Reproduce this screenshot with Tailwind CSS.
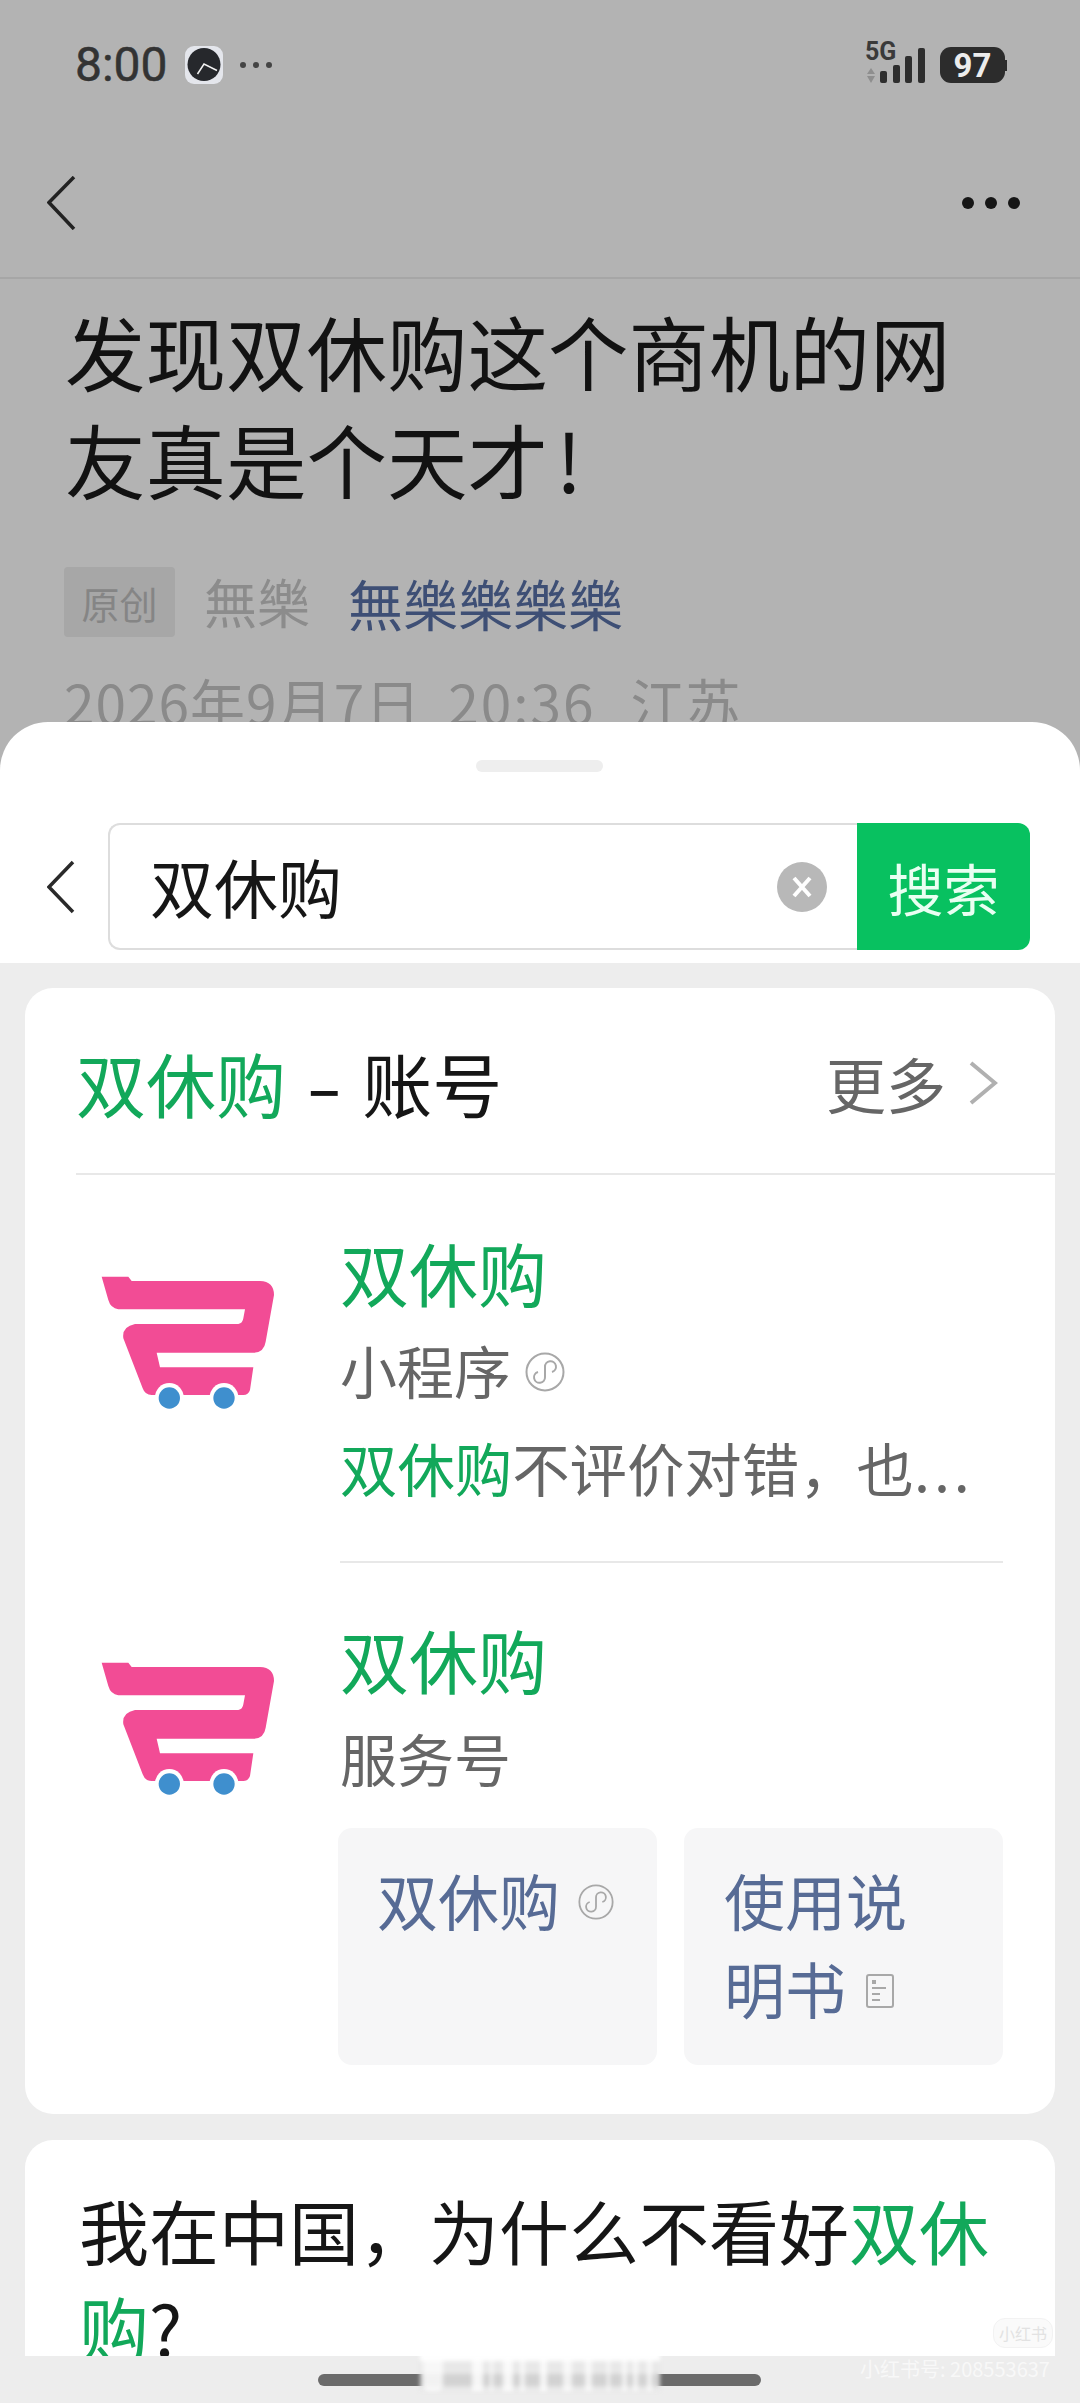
<!DOCTYPE html>
<html lang="zh-CN">
<head>
    <meta charset="UTF-8">
    <meta name="viewport" content="width=device-width, initial-scale=1.0">
    <title>双休购 - 搜索</title>
    <script src="https://cdn.jsdelivr.net/npm/@tailwindcss/browser@4"></script>
</head>
<body class="bg-[#b3b3b3]">
<div class="relative w-[1080px] h-[2403px] overflow-hidden bg-[#b3b3b3] font-['Noto_Sans_CJK_SC',sans-serif] text-[#161616]">

    <!-- dimmed article behind the sheet -->
    <div class="h-[722px] overflow-hidden">
        <!-- status bar -->
        <div class="h-[130px] flex justify-between pl-[75px] pr-[73px] pt-[43px]">
            <div class="flex items-start">
                <span class="font-['Roboto',sans-serif] text-[48px] leading-[44px] text-[#333333] [-webkit-text-stroke:0.5px_#333333]">8:00</span>
                <svg class="ml-[17px] mt-[3px]" width="38" height="38" viewBox="0 0 38 38">
                    <rect width="38" height="38" rx="9" fill="#e4e6ec"/>
                    <circle cx="19" cy="18.500" r="16.500" fill="#26282c"/>
                    <path d="M12.500 28L19 18L32 24.500" stroke="#f2f2f2" stroke-width="1.500" fill="none"/>
                </svg>
                <div class="ml-[17px] mt-[19px] flex gap-[7px]">
                    <div class="w-[6px] h-[6px] rounded-full bg-[#444444]"></div>
                    <div class="w-[6px] h-[6px] rounded-full bg-[#444444]"></div>
                    <div class="w-[6px] h-[6px] rounded-full bg-[#444444]"></div>
                </div>
            </div>
            <div class="flex items-start">
                <div class="relative w-[60px] h-[42px]">
                    <span class="absolute left-0 -top-[4px] font-['Roboto',sans-serif] font-bold text-[25px] leading-[26px] text-[#3a3a3a]">5G</span>
                    <svg class="absolute left-0 top-0" width="60" height="42" viewBox="0 0 60 42">
                        <path d="M2 31L6 25L10 31ZM2 33H10L6 40Z" fill="#8e8e8e"/>
                        <rect x="15" y="28" width="7" height="12" rx="2" fill="#2e2e2e"/>
                        <rect x="28" y="22" width="7" height="18" rx="2" fill="#2e2e2e"/>
                        <rect x="40" y="13" width="7" height="27" rx="2" fill="#2e2e2e"/>
                        <rect x="53" y="5" width="7" height="35" rx="2" fill="#2e2e2e"/>
                    </svg>
                </div>
                <div class="ml-[15px] mt-[4px] w-[65px] h-[36px] rounded-[11px] bg-[#2c2c2c] flex items-center justify-center font-['Roboto',sans-serif] font-bold text-[33px] leading-none text-[#ececec]">97</div>
                <div class="mt-[17px] w-[2px] h-[11px] bg-[#2c2c2c]"></div>
            </div>
        </div>
        <!-- article nav -->
        <div class="h-[149px] border-b-2 border-[#a6a6a6] flex justify-between items-start pl-[47px] pr-[60px] pt-[46px]">
            <svg width="30" height="54" viewBox="0 0 30 54"><path d="M27 1L2 26.500L27 53" fill="none" stroke="#222222" stroke-width="3.500"/></svg>
            <div class="flex gap-[11px] pt-[21px]">
                <div class="w-[12px] h-[12px] rounded-full bg-[#161616]"></div>
                <div class="w-[12px] h-[12px] rounded-full bg-[#161616]"></div>
                <div class="w-[12px] h-[12px] rounded-full bg-[#161616]"></div>
            </div>
        </div>
        <!-- article head -->
        <div class="pl-[65px] pt-[17px] text-[80.500px] leading-[108px] text-[#121212]">
            <p>发现双休购这个商机的网</p>
            <p>友真是个天才<span class="ml-[8px]">!</span></p>
        </div>
        <div class="mt-[55px] pl-[64px] h-[70px] flex items-center">
            <div class="w-[111px] h-[70px] rounded-[4px] bg-[#a7a7a7] flex items-center justify-center text-[38px] text-[#858585]">原创</div>
            <span class="ml-[29px] text-[53px] text-[#8c8c8c]">無樂</span>
            <span class="ml-[38px] text-[55px] text-[#3e4f75]">無樂樂樂樂</span>
        </div>
        <div class="mt-[29px] pl-[64px] flex text-[55px] leading-[70px] text-[#8a8a8a]">
            <span class="tracking-[1px]">2026年9月7日</span>
            <span class="ml-[27px] tracking-[2px]">20:36</span>
            <span class="ml-[35px]">江苏</span>
        </div>
    </div>

    <!-- search sheet -->
    <div class="h-[1681px] rounded-t-[48px] bg-white flex flex-col overflow-hidden">
        <div class="h-[241px] shrink-0 relative">
            <div class="absolute left-[476px] top-[38px] w-[127px] h-[12px] rounded-full bg-[#eeeeee]"></div>
            <div class="pt-[101px] pl-[47px] flex items-center">
                <svg class="mr-[33px]" width="28" height="54" viewBox="0 0 28 54"><path d="M26 2L2 27L26 52" fill="none" stroke="#2a2a2a" stroke-width="3.500"/></svg>
                <div class="w-[922px] h-[127px] flex">
                    <div class="flex-1 rounded-l-[12px] border-y-2 border-l-2 border-[#dddddd] flex items-center justify-between pl-[40px] pr-[30px]">
                        <span class="text-[64px] text-[#161616] -mt-[3px]">双休购</span>
                        <svg width="50" height="50" viewBox="0 0 50 50">
                            <circle cx="25" cy="25" r="25" fill="#b8b8b8"/>
                            <path d="M17 16L33 34M33 16L17 34" stroke="#ffffff" stroke-width="4"/>
                        </svg>
                    </div>
                    <div class="w-[173px] rounded-r-[12px] bg-[#08c160] flex items-center justify-center text-[56px] text-[#e9fff2]">搜索</div>
                </div>
            </div>
        </div>

        <div class="flex-1 min-h-0 bg-[#ededed] flex flex-col">
            <div class="h-[1393px] overflow-hidden px-[25px] pt-[25px] flex flex-col gap-[26px]">
                <!-- account results -->
                <div class="shrink-0 w-[1030px] rounded-[28px] bg-white">
                    <div class="ml-[51px] h-[187px] border-b-2 border-[#e8e8e8] flex items-center justify-between pr-[57px]">
                        <p class="text-[70px] leading-none mt-[4px]">
                            <span class="text-[#12a85a]">双休购</span><span class="inline-block mx-[26px] scale-x-150">-</span><span>账号</span>
                        </p>
                        <div class="flex items-center mt-[4px]">
                            <span class="text-[60px] text-[#666666]">更多</span>
                            <svg class="ml-[22px]" width="30" height="44" viewBox="0 0 30 44"><path d="M3 2L27 22L3 42" fill="none" stroke="#b0b0b0" stroke-width="4"/></svg>
                        </div>
                    </div>

                    <!-- 小程序 row -->
                    <div class="flex">
                        <svg class="ml-[35px] mt-[25px] shrink-0" width="240" height="220" viewBox="0 0 720 660">
                            <path d="M125 230H205L215 243H600Q642 245 642 285L617 425Q612 458 580 458H290L300 502H580L570 570Q565 585 550 585H275Q255 585 248 565L190 415Q185 380 225 372H535Q548 370 550 355L555 328H175Q152 325 145 300Z" fill="#f24c95"/>
                            <circle cx="328" cy="592" r="43" fill="#ffffff"/>
                            <circle cx="492" cy="592" r="43" fill="#ffffff"/>
                            <circle cx="328" cy="594" r="32" fill="#3f8fce"/>
                            <circle cx="492" cy="594" r="32" fill="#3f8fce"/>
                        </svg>
                        <div class="ml-[40px] w-[663px] pt-[48px] h-[388px] border-b-2 border-[#e8e8e8]">
                            <p class="text-[69px] leading-[98px] text-[#12a85a]">双休购</p>
                            <div class="flex items-center h-[98px]">
                                <span class="text-[57px] text-[#666666]">小程序</span>
                                <svg class="ml-[14px] mt-[3px]" width="40" height="40" viewBox="0 0 40 40" fill="none" stroke="#a8a8a8" stroke-width="2">
                                    <circle cx="20" cy="20" r="18.500"/>
                                    <path d="M13 20a5.500 5.500 0 1 0 7 5V15a5.500 5.500 0 1 1 7 5"/>
                                </svg>
                            </div>
                            <p class="text-[57.400px] leading-[96px] whitespace-nowrap text-[#666666]"><span class="text-[#12a85a]">双休购</span>不评价对错&#65292;也<span class="tracking-[4px]">...</span></p>
                        </div>
                    </div>

                    <!-- 服务号 row -->
                    <div class="flex">
                        <svg class="ml-[35px] mt-[23px] shrink-0" width="240" height="220" viewBox="0 0 720 660">
                            <path d="M125 230H205L215 243H600Q642 245 642 285L617 425Q612 458 580 458H290L300 502H580L570 570Q565 585 550 585H275Q255 585 248 565L190 415Q185 380 225 372H535Q548 370 550 355L555 328H175Q152 325 145 300Z" fill="#f24c95"/>
                            <circle cx="328" cy="592" r="43" fill="#ffffff"/>
                            <circle cx="492" cy="592" r="43" fill="#ffffff"/>
                            <circle cx="328" cy="594" r="32" fill="#3f8fce"/>
                            <circle cx="492" cy="594" r="32" fill="#3f8fce"/>
                        </svg>
                        <div class="ml-[38px] w-[665px] pt-[47px] pb-[49px]">
                            <p class="ml-[2px] text-[69px] leading-[98px] text-[#12a85a]">双休购</p>
                            <p class="ml-[2px] text-[57px] leading-[98px] text-[#666666]">服务号</p>
                            <div class="mt-[22px] grid grid-cols-2 gap-[27px] text-[61px] leading-[88px] text-[#576b95]">
                                <div class="h-[237px] rounded-[14px] bg-[#f6f6f7] pl-[39px] pt-[28px]">
                                    <div class="flex items-center">
                                        <span>双休购</span>
                                        <svg class="ml-[18px] mt-[4px]" width="36" height="36" viewBox="0 0 40 40" fill="none" stroke="#a8a8a8" stroke-width="2">
                                            <circle cx="20" cy="20" r="18.500"/>
                                            <path d="M13 20a5.500 5.500 0 1 0 7 5V15a5.500 5.500 0 1 1 7 5"/>
                                        </svg>
                                    </div>
                                </div>
                                <div class="h-[237px] rounded-[14px] bg-[#f6f6f7] pl-[40px] pt-[28px]">
                                    <p>使用说</p>
                                    <div class="flex items-center">
                                        <span>明书</span>
                                        <svg class="ml-[20px] mt-[6px]" width="28" height="34" viewBox="0 0 28 34" fill="none">
                                            <rect x="1" y="1" width="26" height="32" rx="2" stroke="#a8a8a8" stroke-width="2"/>
                                            <rect x="6" y="6" width="4" height="4" fill="#a8a8a8"/>
                                            <path d="M6 14H20M6 20H14M6 26H14" stroke="#a8a8a8" stroke-width="2"/>
                                        </svg>
                                    </div>
                                </div>
                            </div>
                        </div>
                    </div>
                </div>

                <!-- article result, cut off by the home bar -->
                <div class="shrink-0 w-[1030px] h-[400px] rounded-t-[28px] bg-white pl-[54px] pt-[41px] pr-[50px] text-[70px] leading-[97px] text-[#161616]">
                    <p>我在中国&#65292;为什么不看好<span class="text-[#12a85a]">双休购</span>?</p>
                </div>
            </div>
            <div class="flex-1"></div>
        </div>
    </div>

    <!-- home indicator with its blurred middle -->
    <div class="absolute left-[318px] top-[2374px] w-[443px] h-[12px] rounded-full bg-[#6b6b6b]"></div>
    <div class="absolute left-[420px] top-[2353px] w-[240px] h-[38px] bg-[#e8e8e8] blur-[2px] flex">
        <div class="absolute left-0 right-0 top-[21px] h-[12px] bg-[#d2d2d2]"></div>
        <div class="absolute left-0 right-0 top-0 h-[8px] bg-white"></div>
        <div class="relative ml-[3px] w-[20px] h-full rounded-b-[6px] bg-white/70"></div>
        <div class="relative ml-[29px] w-[11px] h-full bg-white/80"></div>
        <div class="relative ml-[7px] w-[3px] h-full bg-white/70"></div>
        <div class="relative ml-[10px] w-[10px] h-full bg-white/80"></div>
        <div class="relative ml-[7px] w-[5px] h-full bg-white/70"></div>
        <div class="relative ml-[15px] w-[7px] h-full bg-white/80"></div>
        <div class="relative ml-[16px] w-[9px] h-full bg-white/70"></div>
        <div class="relative ml-[13px] w-[7px] h-full bg-white/70"></div>
        <div class="relative ml-[15px] w-[3px] h-full bg-white/70"></div>
        <div class="relative ml-[12px] w-[5px] h-full bg-white/70"></div>
        <div class="relative ml-[6px] w-[5px] h-full bg-white/70"></div>
        <div class="relative ml-[9px] w-[5px] h-full bg-white/70"></div>
    </div>

    <!-- watermark -->
    <div class="absolute left-[993px] top-[2318px] w-[60px] h-[30px] rounded-[12px] bg-[#fafafa] border border-[#f2f2f2] flex items-center justify-center text-[16px] leading-none text-[#e2e2e2]">小红书</div>
    <p class="absolute left-[860px] top-[2354px] whitespace-nowrap text-[20px] leading-[30px] text-[#f8f8f8]">小红书号: 208553637</p>
</div>
</body>
</html>
